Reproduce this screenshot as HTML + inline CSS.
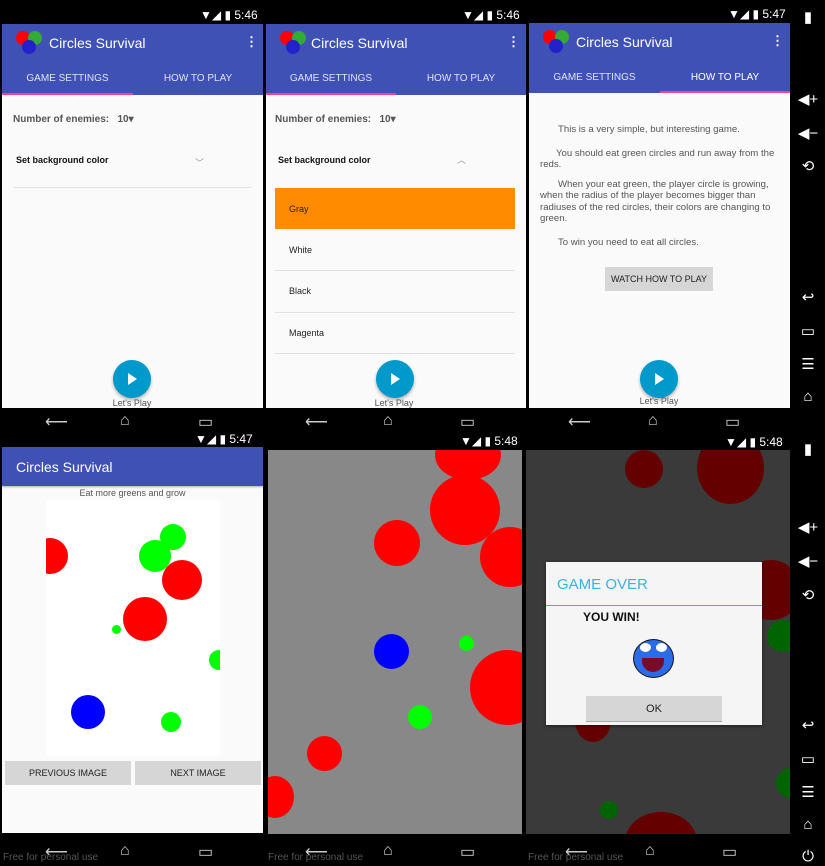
<!DOCTYPE html><html><head><meta charset="utf-8"><style>
*{margin:0;padding:0;box-sizing:border-box}
body{width:825px;height:866px;background:#000;position:relative;overflow:hidden;font-family:"Liberation Sans",sans-serif}
.a{position:absolute}
.st{color:#fff;font-size:12px}
.bar{background:#3f51b5}
.tab{color:#dfe3f5;font-size:10px;text-align:center}
.c{border-radius:50%;position:absolute}
.r{background:#f00}.g{background:#0f0}
.dr{background:#650000}.dg{background:#006400}
.nav{color:#ccc;font-size:16px}
.fab{width:38px;height:38px;border-radius:50%;background:#0099cc;box-shadow:0 2px 3px rgba(0,0,0,.3)}
.fab:after{content:"";position:absolute;left:15px;top:13px;border-left:9px solid #fff;border-top:6px solid transparent;border-bottom:6px solid transparent}
.lp{font-size:9px;color:#555;width:60px;text-align:center}
.sep{height:1px;background:#e2e2e2}
.btn{background:#d6d6d6;font-size:9px;color:#222;text-align:center}
.ri{color:#fff;font-size:15px;left:797px;width:22px;text-align:center}
</style></head><body>
<div class="a st" style="left:200px;top:8px">▼◢ ▮ 5:46</div>
<div class="a st" style="left:462px;top:8px">▼◢ ▮ 5:46</div>
<div class="a st" style="left:728px;top:7px">▼◢ ▮ 5:47</div>
<div class="a st" style="left:195px;top:432px">▼◢ ▮ 5:47</div>
<div class="a st" style="left:460px;top:434px">▼◢ ▮ 5:48</div>
<div class="a st" style="left:725px;top:435px">▼◢ ▮ 5:48</div>

<div class="a bar" style="left:2px;top:24px;width:261px;height:71px"></div>
<div class="a" style="left:2px;top:93px;width:131px;height:2px;background:#ff4081"></div>
<div class="a" style="left:2px;top:95px;width:261px;height:313px;background:#fafafa"></div>
<div class="c r" style="left:16px;top:31px;width:14px;height:14px"></div>
<div class="c" style="left:28px;top:31px;width:14px;height:14px;background:#3a3"></div>
<div class="c" style="left:22px;top:40px;width:14px;height:14px;background:#22c"></div>
<div class="a" style="left:49px;top:35px;color:#fff;font-size:14px">Circles Survival</div>
<div class="a" style="left:245px;top:34px;color:#fff;font-size:13px;font-weight:bold">⋮</div>
<div class="a tab" style="left:2px;top:73px;width:131px">GAME SETTINGS</div>
<div class="a tab" style="left:133px;top:73px;width:130px">HOW TO PLAY</div>
<div class="a" style="left:13px;top:114px;font-size:10px;color:#555;font-weight:bold">Number of enemies:&nbsp;&nbsp; 10▾</div>
<div class="a" style="left:16px;top:155px;font-size:9px;color:#111;font-weight:bold">Set background color</div>
<div class="a" style="left:195px;top:156px;font-size:9px;color:#999">﹀</div>
<div class="a sep" style="left:13px;top:187px;width:239px"></div>
<div class="a fab" style="left:113px;top:360px"></div>
<div class="a lp" style="left:102px;top:398px">Let's Play</div>

<div class="a bar" style="left:266px;top:24px;width:260px;height:71px"></div>
<div class="a" style="left:266px;top:93px;width:130px;height:2px;background:#ff4081"></div>
<div class="a" style="left:266px;top:95px;width:260px;height:313px;background:#fafafa"></div>
<div class="c r" style="left:280px;top:31px;width:14px;height:14px"></div>
<div class="c" style="left:292px;top:31px;width:14px;height:14px;background:#3a3"></div>
<div class="c" style="left:286px;top:40px;width:14px;height:14px;background:#22c"></div>
<div class="a" style="left:311px;top:35px;color:#fff;font-size:14px">Circles Survival</div>
<div class="a" style="left:507px;top:34px;color:#fff;font-size:13px;font-weight:bold">⋮</div>
<div class="a tab" style="left:266px;top:73px;width:130px">GAME SETTINGS</div>
<div class="a tab" style="left:396px;top:73px;width:130px">HOW TO PLAY</div>
<div class="a" style="left:275px;top:114px;font-size:10px;color:#555;font-weight:bold">Number of enemies:&nbsp;&nbsp; 10▾</div>
<div class="a" style="left:278px;top:155px;font-size:9px;color:#111;font-weight:bold">Set background color</div>
<div class="a" style="left:457px;top:153px;font-size:9px;color:#999">︿</div>
<div class="a" style="left:275px;top:188px;width:240px;height:41px;background:#ff8c00"></div>
<div class="a" style="left:289px;top:204px;font-size:9px;color:#222">Gray</div>
<div class="a" style="left:289px;top:245px;font-size:9px;color:#222">White</div>
<div class="a sep" style="left:275px;top:270px;width:240px"></div>
<div class="a" style="left:289px;top:286px;font-size:9px;color:#222">Black</div>
<div class="a sep" style="left:275px;top:312px;width:240px"></div>
<div class="a" style="left:289px;top:328px;font-size:9px;color:#222">Magenta</div>
<div class="a sep" style="left:275px;top:353px;width:240px"></div>
<div class="a fab" style="left:376px;top:360px"></div>
<div class="a lp" style="left:364px;top:398px">Let's Play</div>

<div class="a bar" style="left:529px;top:23px;width:261px;height:70px"></div>
<div class="a" style="left:660px;top:91px;width:130px;height:2px;background:#ff4081"></div>
<div class="a" style="left:529px;top:93px;width:261px;height:315px;background:#fafafa"></div>
<div class="c r" style="left:543px;top:30px;width:14px;height:14px"></div>
<div class="c" style="left:555px;top:30px;width:14px;height:14px;background:#3a3"></div>
<div class="c" style="left:549px;top:39px;width:14px;height:14px;background:#22c"></div>
<div class="a" style="left:576px;top:34px;color:#fff;font-size:14px">Circles Survival</div>
<div class="a" style="left:771px;top:33px;color:#fff;font-size:13px;font-weight:bold">⋮</div>
<div class="a tab" style="left:529px;top:72px;width:131px">GAME SETTINGS</div>
<div class="a tab" style="left:660px;top:72px;width:130px;color:#fff">HOW TO PLAY</div>
<div class="a" style="left:540px;top:124px;width:240px;font-size:9.6px;color:#555;line-height:11.5px">
<p style="text-indent:18px;margin-bottom:12px">This is a very simple, but interesting game.</p>
<p style="text-indent:16px;margin-bottom:8px">You should eat green circles and run away from the reds.</p>
<p style="text-indent:18px;margin-bottom:12px">When your eat green, the player circle is growing, when the radius of the player becomes bigger than radiuses of the red circles, their colors are changing to green.</p>
<p style="text-indent:18px">To win you need to eat all circles.</p></div>
<div class="a btn" style="left:605px;top:267px;width:108px;height:24px;line-height:24px">WATCH HOW TO PLAY</div>
<div class="a fab" style="left:640px;top:360px"></div>
<div class="a lp" style="left:629px;top:396px">Let's Play</div>

<div class="a nav" style="left:45px;top:412px">⟵</div><div class="a nav" style="left:120px;top:412px">⌂</div><div class="a nav" style="left:198px;top:412px">▭</div>
<div class="a nav" style="left:305px;top:412px">⟵</div><div class="a nav" style="left:383px;top:412px">⌂</div><div class="a nav" style="left:460px;top:412px">▭</div>
<div class="a nav" style="left:568px;top:412px">⟵</div><div class="a nav" style="left:648px;top:412px">⌂</div><div class="a nav" style="left:725px;top:412px">▭</div>

<div class="a" style="left:2px;top:447px;width:261px;height:386px;background:#fafafa"></div>
<div class="a bar" style="left:2px;top:447px;width:261px;height:39px;box-shadow:0 1px 2px rgba(0,0,0,.3)"></div>
<div class="a" style="left:16px;top:459px;color:#fff;font-size:14px">Circles Survival</div>
<div class="a" style="left:2px;top:488px;width:261px;text-align:center;font-size:9px;color:#555">Eat more greens and grow</div>
<div class="a" style="left:46px;top:500px;width:174px;height:256px;background:#fff;overflow:hidden">
<div class="c r" style="left:-14px;top:38px;width:36px;height:36px"></div>
<div class="c g" style="left:114px;top:24px;width:26px;height:26px"></div>
<div class="c g" style="left:93px;top:40px;width:32px;height:32px"></div>
<div class="c r" style="left:116px;top:60px;width:40px;height:40px"></div>
<div class="c r" style="left:77px;top:97px;width:44px;height:44px"></div>
<div class="c g" style="left:66px;top:125px;width:9px;height:9px"></div>
<div class="c g" style="left:163px;top:150px;width:20px;height:20px"></div>
<div class="c" style="left:25px;top:195px;width:34px;height:34px;background:#00f"></div>
<div class="c g" style="left:115px;top:212px;width:20px;height:20px"></div>
</div>
<div class="a btn" style="left:5px;top:761px;width:126px;height:24px;line-height:24px">PREVIOUS IMAGE</div>
<div class="a btn" style="left:135px;top:761px;width:126px;height:24px;line-height:24px">NEXT IMAGE</div>

<div class="a" style="left:268px;top:450px;width:254px;height:384px;background:#888;overflow:hidden">
<div class="c r" style="left:167px;top:-20px;width:66px;height:50px"></div>
<div class="c r" style="left:162px;top:25px;width:70px;height:70px"></div>
<div class="c r" style="left:212px;top:77px;width:60px;height:60px"></div>
<div class="c r" style="left:106px;top:70px;width:46px;height:46px"></div>
<div class="c" style="left:106px;top:184px;width:35px;height:35px;background:#00f"></div>
<div class="c g" style="left:191px;top:186px;width:15px;height:15px"></div>
<div class="c r" style="left:202px;top:200px;width:75px;height:75px"></div>
<div class="c g" style="left:140px;top:255px;width:24px;height:24px"></div>
<div class="c r" style="left:39px;top:286px;width:35px;height:35px"></div>
<div class="c r" style="left:-12px;top:326px;width:38px;height:42px"></div>
</div>

<div class="a" style="left:526px;top:450px;width:264px;height:384px;background:#3a3a3a;overflow:hidden">
<div class="c dr" style="left:99px;top:0;width:38px;height:38px"></div>
<div class="c dr" style="left:171px;top:-18px;width:67px;height:72px"></div>
<div class="c dr" style="left:215px;top:110px;width:60px;height:60px"></div>
<div class="c dg" style="left:241px;top:170px;width:32px;height:32px"></div>
<div class="c dr" style="left:49px;top:250px;width:36px;height:42px"></div>
<div class="c dg" style="left:250px;top:318px;width:30px;height:30px"></div>
<div class="c dg" style="left:74px;top:351px;width:18px;height:18px"></div>
<div class="c dr" style="left:99px;top:362px;width:72px;height:60px"></div>
</div>
<div class="a" style="left:546px;top:562px;width:216px;height:163px;background:#f5f5f5;box-shadow:0 1px 3px rgba(0,0,0,.5)"></div>
<div class="a" style="left:557px;top:576px;font-size:15px;color:#33b5e5">GAME OVER</div>
<div class="a" style="left:546px;top:605px;width:216px;height:1px;background:#33b5e5"></div>
<div class="a" style="left:583px;top:610px;font-size:12px;font-weight:bold;color:#111">YOU WIN!</div>
<div class="c" style="left:633px;top:639px;width:41px;height:39px;background:#2a6be8;border:1px solid #111"></div>
<div class="c" style="left:640px;top:643px;width:11px;height:9px;background:#fff"></div>
<div class="c" style="left:656px;top:643px;width:11px;height:9px;background:#fff"></div>
<div class="a" style="left:642px;top:658px;width:22px;height:14px;background:#7a0a2a;border-radius:0 0 11px 11px"></div>
<div class="a btn" style="left:586px;top:696px;width:136px;height:26px;line-height:26px;font-size:11px;border-bottom:1px solid #aaa">OK</div>

<div class="a nav" style="left:45px;top:842px">⟵</div><div class="a nav" style="left:120px;top:842px">⌂</div><div class="a nav" style="left:198px;top:842px">▭</div>
<div class="a nav" style="left:305px;top:842px">⟵</div><div class="a nav" style="left:383px;top:842px">⌂</div><div class="a nav" style="left:460px;top:842px">▭</div>
<div class="a nav" style="left:565px;top:842px">⟵</div><div class="a nav" style="left:645px;top:842px">⌂</div><div class="a nav" style="left:722px;top:842px">▭</div>
<div class="a" style="left:3px;top:852px;font-size:10px;color:#555">Free for personal use</div>
<div class="a" style="left:268px;top:852px;font-size:10px;color:#555">Free for personal use</div>
<div class="a" style="left:528px;top:852px;font-size:10px;color:#555">Free for personal use</div>

<div class="a ri" style="top:8px">▮</div>
<div class="a ri" style="top:90px">◀+</div><div class="a ri" style="top:124px">◀−</div><div class="a ri" style="top:157px">⟲</div>
<div class="a ri" style="top:288px">↩</div><div class="a ri" style="top:322px">▭</div><div class="a ri" style="top:355px">☰</div><div class="a ri" style="top:388px">⌂</div>
<div class="a ri" style="top:440px">▮</div>
<div class="a ri" style="top:518px">◀+</div><div class="a ri" style="top:552px">◀−</div><div class="a ri" style="top:586px">⟲</div>
<div class="a ri" style="top:716px">↩</div><div class="a ri" style="top:750px">▭</div><div class="a ri" style="top:783px">☰</div><div class="a ri" style="top:816px">⌂</div><div class="a ri" style="top:848px">⏻</div>
</body></html>
